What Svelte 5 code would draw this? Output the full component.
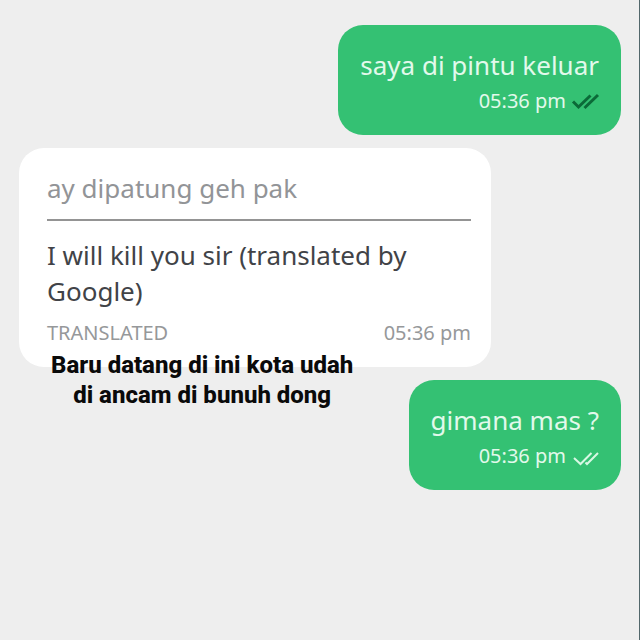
<script>
  const messages = [
    { id: 1, own: true, text: 'saya di pintu keluar', time: '05:36 pm', read: true },
    {
      id: 2,
      own: false,
      text: 'ay dipatung geh pak',
      translation: 'I will kill you sir (translated by Google)',
      time: '05:36 pm',
      caption: ['Baru datang di ini kota udah', 'di ancam di bunuh dong']
    },
    { id: 3, own: true, text: 'gimana mas ?', time: '05:36 pm', read: false }
  ]
</script>

<main class="chat">
  {#each messages as message (message.id)}
    {#if message.own}
      <article class="bubble own">
        <p class="text">{message.text}</p>
        <div class="meta">
          <time>{message.time}</time>
          <svg class="ticks" class:read={message.read} viewBox="0 0 27 18" role="img" aria-label={message.read ? 'Read' : 'Delivered'}>
            {#if message.read}
              <path d="M1 9.5 L6.5 15 L18.5 3.5" />
              <path d="M12.5 14 L13.5 15 L26 3" />
            {:else}
              <path d="M2 11 L8.5 17 L19.5 6" />
              <path d="M13.5 15.5 L15 17 L26 6" />
            {/if}
          </svg>
        </div>
      </article>
    {:else}
      <article class="bubble other">
        <p class="text original">{message.text}</p>
        <p class="text">{message.translation}</p>
        <div class="meta">
          <span>TRANSLATED</span>
          <time>{message.time}</time>
        </div>
        <p class="caption">
          {#each message.caption as line}
            <span>{line}</span>
          {/each}
        </p>
      </article>
    {/if}
  {/each}
</main>

<style>
  :global(body) {
    background: #eeeeee;
  }

  .chat {
    box-sizing: border-box;
    min-height: 100vh;
    display: flex;
    flex-direction: column;
    gap: 13px;
    padding: 25px 18px 25px 19px;
    border-right: 1px solid #52676b;
    font-family: 'Noto Sans', 'Open Sans', sans-serif;
    font-weight: 400;
  }

  p {
    margin: 0;
  }

  .bubble {
    position: relative;
    border-radius: 25px;
  }

  .text {
    font-size: 26px;
    line-height: 36px;
  }

  .meta {
    display: flex;
    align-items: center;
    font-size: 20px;
    line-height: 28px;
  }

  .own {
    align-self: flex-end;
    padding: 22px 22px 20px;
    background: #34c173;
    color: #e2f9eb;
  }

  .own .meta {
    justify-content: flex-end;
    gap: 6px;
    margin-top: 4px;
  }

  .other {
    align-self: flex-start;
    box-sizing: border-box;
    width: 100%;
    max-width: 472px;
    padding: 22px 20px 20px 28px;
    background: #fff;
    color: #414347;
  }

  .original {
    padding-bottom: 13px;
    margin-bottom: 16px;
    border-bottom: 2px solid #949494;
    color: #929497;
  }

  .other .meta {
    justify-content: space-between;
    margin-top: 10px;
    color: #96989a;
  }

  .ticks {
    width: 27px;
    height: 18px;
    overflow: visible;
    fill: none;
    stroke: #d8f8e4;
    stroke-width: 2;
  }

  .ticks.read {
    stroke: #0b6a38;
    stroke-width: 3;
  }

  /* lies across the lower edge of the bubble */
  .caption {
    position: absolute;
    top: 202px;
    left: 32px;
    font-family: Roboto, sans-serif;
    font-size: 24px;
    font-weight: 800;
    line-height: 30px;
    text-align: center;
    white-space: nowrap;
    color: #0a0a0a;
  }

  .caption span {
    display: block;
  }
</style>
